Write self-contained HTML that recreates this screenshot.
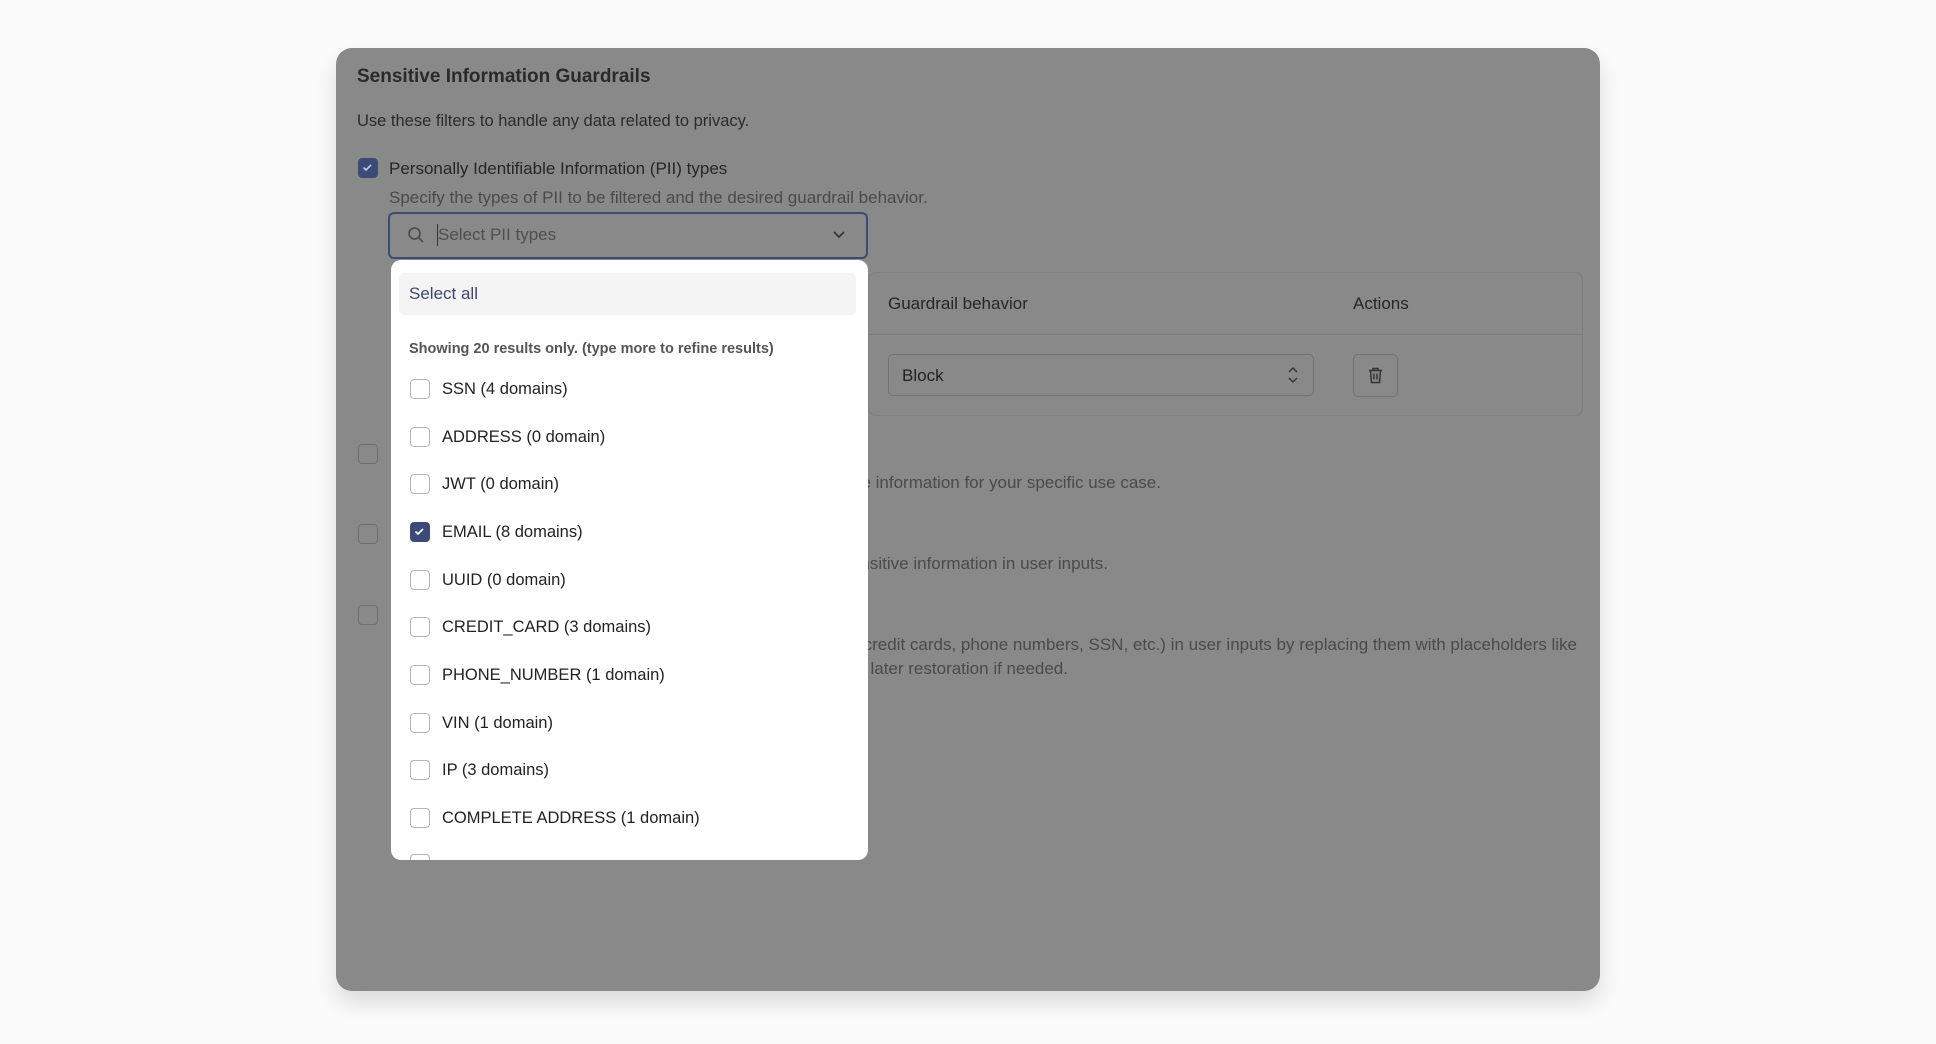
<!DOCTYPE html>
<html><head><meta charset="utf-8"><style>
*{box-sizing:border-box;margin:0;padding:0}
body{width:1936px;height:1044px;background:#fafafa;font-family:"Liberation Sans",sans-serif;position:relative;overflow:hidden}
.card{position:absolute;left:336px;top:48px;width:1264px;height:943px;background:#898989;border-radius:16px;box-shadow:0 12px 20px rgba(0,0,0,0.12)}
.a{position:absolute;white-space:nowrap}
.cb{position:absolute;width:20px;height:20px;border:1.5px solid #6f6f6f;border-radius:4px}
.dcb{position:absolute;width:20px;height:20px;border:1.5px solid #b5b5b5;border-radius:4px;background:#fff}
.item{position:absolute;left:442px;font-size:16.5px;color:#222}
</style></head><body>
<div class="card"></div>
<div class="a" style="left:357px;top:66px;font-size:19px;font-weight:bold;color:#2a2a2a">Sensitive Information Guardrails</div>
<div class="a" style="left:357px;top:112px;font-size:16.5px;color:#2b2b2b">Use these filters to handle any data related to privacy.</div>
<div class="cb" style="left:358px;top:158px;background:#3c4a78;border-color:#3c4a78"><svg width="17" height="17" viewBox="0 0 17 17" style="position:absolute;left:0;top:0"><path d="M4.5 8.5l2.5 2.5 5-5" stroke="#c8cce0" stroke-width="1.6" fill="none"/></svg></div>
<div class="a" style="left:389px;top:159px;font-size:17px;color:#262626">Personally Identifiable Information (PII) types</div>
<div class="a" style="left:389px;top:188px;font-size:17px;color:#4a4a4a">Specify the types of PII to be filtered and the desired guardrail behavior.</div>
<div class="a" style="left:388px;top:212px;width:480px;height:47px;border:2px solid #3e4a72;border-radius:6px"></div>
<svg class="a" style="left:407px;top:226px" width="18" height="18" viewBox="0 0 18 18"><circle cx="7.5" cy="7.5" r="5.5" stroke="#4a4a4a" stroke-width="1.6" fill="none"/><path d="M11.5 11.5l4.5 4.5" stroke="#4a4a4a" stroke-width="1.6"/></svg>
<div class="a" style="left:437px;top:224px;width:1px;height:22px;background:#333"></div>
<div class="a" style="left:438px;top:225px;font-size:17px;color:#4f4f4f">Select PII types</div>
<svg class="a" style="left:832px;top:229px" width="14" height="12" viewBox="0 0 14 12"><path d="M2 3l5 5 5-5" stroke="#333" stroke-width="1.6" fill="none"/></svg>
<div class="a" style="left:868px;top:272px;width:715px;height:144px;border:1px solid #7d7d7d;border-radius:8px"></div>
<div class="a" style="left:868px;top:334px;width:715px;height:1px;background:#7d7d7d"></div>
<div class="a" style="left:888px;top:294px;font-size:17px;color:#262626">Guardrail behavior</div>
<div class="a" style="left:1353px;top:294px;font-size:17px;color:#262626">Actions</div>
<div class="a" style="left:888px;top:354px;width:426px;height:42px;border:1px solid #727272;border-radius:5px"></div>
<div class="a" style="left:902px;top:366px;font-size:17px;color:#222">Block</div>
<svg class="a" style="left:1286px;top:366px" width="14" height="18" viewBox="0 0 14 18"><path d="M3 6l4-4 4 4M3 12l4 4 4-4" stroke="#333" stroke-width="1.4" fill="none"/></svg>
<div class="a" style="left:1353px;top:354px;width:45px;height:43px;border:1px solid #727272;border-radius:5px"></div>
<svg class="a" style="left:1366px;top:366px" width="19" height="19" viewBox="0 0 19 19"><path d="M3 4.5h13M7 4.5V2.5h5v2M4.5 4.5l1 12h8l1-12M8 7.5v6M11 7.5v6" stroke="#333" stroke-width="1.5" fill="none"/></svg>
<div class="cb" style="left:358px;top:444px"></div>
<div class="cb" style="left:358px;top:524px"></div>
<div class="cb" style="left:358px;top:605px"></div>
<div class="a" style="right:775px;top:473px;font-size:17px;color:#4a4a4a">Customize sensitive information for your specific use case.</div>
<div class="a" style="right:828px;top:554px;font-size:17px;color:#4a4a4a">Detect and mask sensitive information in user inputs.</div>
<div class="a" style="right:359px;top:635px;font-size:17px;color:#4a4a4a">Detect sensitive data (credit cards, phone numbers, SSN, etc.) in user inputs by replacing them with placeholders like</div>
<div class="a" style="right:868px;top:659px;font-size:17px;color:#4a4a4a">tokens, allowing for later restoration if needed.</div>
<div class="a" style="left:391px;top:260px;width:477px;height:600px;background:#fff;border-radius:10px;overflow:hidden">
<div class="a" style="left:8px;top:13px;width:457px;height:42px;background:#f4f4f4;border-radius:5px"></div>
<div class="a" style="left:18px;top:24px;font-size:17px;color:#3d4670">Select all</div>
<div class="a" style="left:18px;top:81px;font-size:14.5px;font-weight:bold;color:#555">Showing 20 results only. (type more to refine results)</div>
</div>
<div class="dcb" style="left:410px;top:379px"></div><div class="item" style="top:380px">SSN (4 domains)</div>
<div class="dcb" style="left:410px;top:427px"></div><div class="item" style="top:428px">ADDRESS (0 domain)</div>
<div class="dcb" style="left:410px;top:474px"></div><div class="item" style="top:475px">JWT (0 domain)</div>
<div class="dcb" style="left:410px;top:522px;background:#3c4a78;border-color:#3c4a78"><svg width="17" height="17" viewBox="0 0 17 17" style="position:absolute;left:0;top:0"><path d="M4.5 8.5l2.5 2.5 5-5" stroke="#fff" stroke-width="1.6" fill="none"/></svg></div><div class="item" style="top:523px">EMAIL (8 domains)</div>
<div class="dcb" style="left:410px;top:570px"></div><div class="item" style="top:571px">UUID (0 domain)</div>
<div class="dcb" style="left:410px;top:617px"></div><div class="item" style="top:618px">CREDIT_CARD (3 domains)</div>
<div class="dcb" style="left:410px;top:665px"></div><div class="item" style="top:666px">PHONE_NUMBER (1 domain)</div>
<div class="dcb" style="left:410px;top:713px"></div><div class="item" style="top:714px">VIN (1 domain)</div>
<div class="dcb" style="left:410px;top:760px"></div><div class="item" style="top:761px">IP (3 domains)</div>
<div class="dcb" style="left:410px;top:808px"></div><div class="item" style="top:809px">COMPLETE ADDRESS (1 domain)</div>
<div class="a" style="left:391px;top:852px;width:477px;height:8px;overflow:hidden;border-radius:0 0 10px 10px"><div class="dcb" style="left:19px;top:2px"></div></div>
</body></html>
